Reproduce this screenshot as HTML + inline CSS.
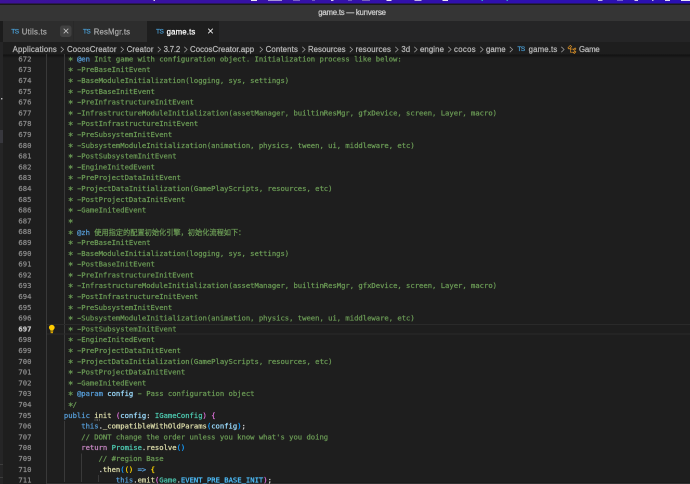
<!DOCTYPE html><html><head><meta charset="utf-8"><title>game.ts — kunverse</title><style>

html,body{margin:0;padding:0;background:#1e1e1e;}
body{width:690px;height:484px;overflow:hidden;position:relative;font-family:"Liberation Sans","Noto Sans CJK SC",sans-serif;}
.a{position:absolute;white-space:pre;}
.ui{font-family:"Liberation Sans","Noto Sans CJK SC",sans-serif;font-size:15.6px;line-height:20px;}
.m{font-family:"DejaVu Sans Mono","Liberation Mono","Noto Sans CJK SC",monospace;font-size:14.4px;line-height:21.6px;height:21.6px;letter-spacing:-0.003px;}
.m,.ui{-webkit-text-stroke:0.5px currentColor;}
.as{display:inline-block;transform:translateY(3.4px) scale(1.22);}
.us{position:relative;top:-2.4px;}
.hy{display:inline-block;transform:scaleX(1.7);}
.cj{font-family:"Noto Sans CJK SC",sans-serif;font-size:14.4px;letter-spacing:0;}
.ln{color:#8b8b8b;text-align:right;left:0;width:62.8px;}
.g{position:absolute;width:2px;background:#393939;}
.ts{color:#4a9fd6;font-size:13px;letter-spacing:-0.9px;-webkit-text-stroke:0.4px currentColor;}
.sep{color:#a0a0a0;}

</style></head><body><div id="root" style="position:absolute;left:0;top:0;width:1380px;height:968px;transform:scale(0.5);transform-origin:0 0;will-change:transform;">
<div class="a" style="left:0;top:0;width:1380px;height:8px;background:linear-gradient(90deg,#3d1298,#3411aa 50%,#2a10b4)"></div>
<div class="a" style="left:307px;top:0;width:3px;height:2.2px;background:#fff;opacity:0.8"></div>
<div class="a" style="left:502px;top:0;width:12px;height:2.2px;background:#fff;opacity:0.9"></div>
<div class="a" style="left:536px;top:0;width:28px;height:2.2px;background:#fff;opacity:0.55"></div>
<div class="a" style="left:586px;top:0;width:14px;height:2.2px;background:#fff;opacity:0.35"></div>
<div class="a" style="left:624px;top:0;width:6px;height:2.2px;background:#fff;opacity:0.3"></div>
<div class="a" style="left:662px;top:0;width:5px;height:2.2px;background:#fff;opacity:0.8"></div>
<div class="a" style="left:696px;top:0;width:8px;height:2.2px;background:#fff;opacity:0.3"></div>
<div class="a" style="left:724px;top:0;width:16px;height:2.2px;background:#ccc;opacity:0.45"></div>
<div class="a" style="left:773.2px;top:0;width:9.8px;height:2.2px;background:#fff;opacity:0.9"></div>
<div class="a" style="left:829.4px;top:0;width:13.8px;height:2.2px;background:#fff;opacity:0.7"></div>
<div class="a" style="left:885px;top:0;width:11px;height:2.2px;background:#fff;opacity:0.9"></div>
<div class="a" style="left:963px;top:0;width:3px;height:2.2px;background:#3cc;opacity:0.8"></div>
<div class="a" style="left:1013px;top:0;width:3px;height:2.2px;background:#3cc;opacity:0.8"></div>
<div class="a" style="left:1196px;top:0;width:9px;height:2.2px;background:#fff;opacity:0.7"></div>
<div class="a" style="left:1234px;top:0;width:12px;height:2.2px;background:#fff;opacity:0.35"></div>
<div class="a" style="left:1269px;top:0;width:7px;height:2.2px;background:#fff;opacity:0.8"></div>
<div class="a" style="left:1304px;top:0;width:3px;height:2.2px;background:#fff;opacity:0.7"></div>
<div class="a" style="left:1330px;top:0;width:10px;height:2.2px;background:#fff;opacity:0.85"></div>
<div class="a" style="left:1362px;top:0;width:18px;height:2.2px;background:#fff;opacity:0.9"></div>
<div class="a" style="left:0;top:6.8px;width:1380px;height:4px;background:#1a1a1a"></div>
<div class="a" style="left:0;top:10px;width:1380px;height:32px;background:#353535"></div>
<div class="a ui fit" style="left:636.6px;top:15.2px;color:#cccccc;letter-spacing:-0.4564px" id="title">game.ts — kunverse</div>
<div class="a" style="left:0;top:42px;width:1380px;height:42px;background:#252526"></div>
<div class="a" style="left:6px;top:42px;width:140px;height:42px;background:#2d2d2d"></div>
<div class="a" style="left:147px;top:42px;width:147px;height:42px;background:#2d2d2d"></div>
<div class="a" style="left:294px;top:42px;width:144px;height:42px;background:#1e1e1e"></div>
<div class="a" style="left:0;top:42px;width:6px;height:42px;background:#1c1c1c"></div>
<div class="a ui ts" style="left:22.4px;top:52.6px;" >TS</div>
<div class="a ui fit" id="t1" style="left:43.6px;top:53.8px;color:#a6a6a6;letter-spacing:0.4524px">Utils.ts</div>
<div class="a ui ts" style="left:165.8px;top:52.6px;" >TS</div>
<div class="a ui fit" id="t2" style="left:187.4px;top:53.8px;color:#a6a6a6;letter-spacing:0.3124px">ResMgr.ts</div>
<div class="a ui ts" style="left:312px;top:52.6px;" >TS</div>
<div class="a ui fit" id="t3" style="left:333.2px;top:53.8px;color:#ffffff;letter-spacing:0.3308px">game.ts</div>
<div class="a" style="left:120px;top:51px;width:23px;height:23px;border-radius:5px;background:#414141"></div>
<svg class="a" style="left:123.6px;top:54.4px" width="16" height="16" viewBox="0 0 8 8"><path d="M1.7 1.7 L6.3 6.3 M6.3 1.7 L1.7 6.3" stroke="#c5c5c5" stroke-width="0.75" fill="none"/></svg>
<svg class="a" style="left:413.4px;top:54.4px" width="16" height="16" viewBox="0 0 8 8"><path d="M1.7 1.7 L6.3 6.3 M6.3 1.7 L1.7 6.3" stroke="#ffffff" stroke-width="0.75" fill="none"/></svg>
<div class="a" style="left:6px;top:84px;width:1374px;height:27px;background:#1e1e1e"></div>
<div class="a ui fit" id="bc0" style="left:25.2px;top:88.8px;color:#b8b8b8;letter-spacing:0.3922px">Applications</div>
<div class="a ui fit" id="bc1" style="left:134px;top:88.8px;color:#b8b8b8;letter-spacing:0.2498px">CocosCreator</div>
<div class="a ui fit" id="bc2" style="left:253.2px;top:88.8px;color:#b8b8b8;letter-spacing:0.2858px">Creator</div>
<div class="a ui fit" id="bc3" style="left:327.2px;top:88.8px;color:#b8b8b8;letter-spacing:-0.3774px">3.7.2</div>
<div class="a ui fit" id="bc4" style="left:380px;top:88.8px;color:#b8b8b8;letter-spacing:0.1696px">CocosCreator.app</div>
<div class="a ui fit" id="bc5" style="left:531.2px;top:88.8px;color:#b8b8b8;letter-spacing:0.2972px">Contents</div>
<div class="a ui fit" id="bc6" style="left:616px;top:88.8px;color:#b8b8b8;letter-spacing:0.0726px">Resources</div>
<div class="a ui fit" id="bc7" style="left:711.2px;top:88.8px;color:#b8b8b8;letter-spacing:0.259px">resources</div>
<div class="a ui fit" id="bc8" style="left:802.8px;top:88.8px;color:#b8b8b8;letter-spacing:-0.0796px">3d</div>
<div class="a ui fit" id="bc9" style="left:840px;top:88.8px;color:#b8b8b8;letter-spacing:0.1954px">engine</div>
<div class="a ui fit" id="bc10" style="left:908px;top:88.8px;color:#b8b8b8;letter-spacing:0.65px">cocos</div>
<div class="a ui fit" id="bc11" style="left:972px;top:88.8px;color:#b8b8b8;letter-spacing:0.046px">game</div>
<div class="a ui fit" id="bc12" style="left:1057.2px;top:88.8px;color:#b8b8b8;letter-spacing:0.3022px">game.ts</div>
<div class="a ui fit" id="bc13" style="left:1158px;top:88.8px;color:#b8b8b8;letter-spacing:-0.3172px">Game</div>
<svg class="a" style="left:120px;top:92px" width="10" height="14" viewBox="0 0 5 7"><path d="M0.8 0.8 L3.6 3.5 L0.8 6.2" stroke="#9a9a9a" stroke-width="0.75" fill="none"/></svg>
<svg class="a" style="left:240px;top:92px" width="10" height="14" viewBox="0 0 5 7"><path d="M0.8 0.8 L3.6 3.5 L0.8 6.2" stroke="#9a9a9a" stroke-width="0.75" fill="none"/></svg>
<svg class="a" style="left:314px;top:92px" width="10" height="14" viewBox="0 0 5 7"><path d="M0.8 0.8 L3.6 3.5 L0.8 6.2" stroke="#9a9a9a" stroke-width="0.75" fill="none"/></svg>
<svg class="a" style="left:367.2px;top:92px" width="10" height="14" viewBox="0 0 5 7"><path d="M0.8 0.8 L3.6 3.5 L0.8 6.2" stroke="#9a9a9a" stroke-width="0.75" fill="none"/></svg>
<svg class="a" style="left:518px;top:92px" width="10" height="14" viewBox="0 0 5 7"><path d="M0.8 0.8 L3.6 3.5 L0.8 6.2" stroke="#9a9a9a" stroke-width="0.75" fill="none"/></svg>
<svg class="a" style="left:602.8px;top:92px" width="10" height="14" viewBox="0 0 5 7"><path d="M0.8 0.8 L3.6 3.5 L0.8 6.2" stroke="#9a9a9a" stroke-width="0.75" fill="none"/></svg>
<svg class="a" style="left:698px;top:92px" width="10" height="14" viewBox="0 0 5 7"><path d="M0.8 0.8 L3.6 3.5 L0.8 6.2" stroke="#9a9a9a" stroke-width="0.75" fill="none"/></svg>
<svg class="a" style="left:788.8px;top:92px" width="10" height="14" viewBox="0 0 5 7"><path d="M0.8 0.8 L3.6 3.5 L0.8 6.2" stroke="#9a9a9a" stroke-width="0.75" fill="none"/></svg>
<svg class="a" style="left:827.2px;top:92px" width="10" height="14" viewBox="0 0 5 7"><path d="M0.8 0.8 L3.6 3.5 L0.8 6.2" stroke="#9a9a9a" stroke-width="0.75" fill="none"/></svg>
<svg class="a" style="left:894.8px;top:92px" width="10" height="14" viewBox="0 0 5 7"><path d="M0.8 0.8 L3.6 3.5 L0.8 6.2" stroke="#9a9a9a" stroke-width="0.75" fill="none"/></svg>
<svg class="a" style="left:958.8px;top:92px" width="10" height="14" viewBox="0 0 5 7"><path d="M0.8 0.8 L3.6 3.5 L0.8 6.2" stroke="#9a9a9a" stroke-width="0.75" fill="none"/></svg>
<svg class="a" style="left:1018px;top:92px" width="10" height="14" viewBox="0 0 5 7"><path d="M0.8 0.8 L3.6 3.5 L0.8 6.2" stroke="#9a9a9a" stroke-width="0.75" fill="none"/></svg>
<svg class="a" style="left:1121.2px;top:92px" width="10" height="14" viewBox="0 0 5 7"><path d="M0.8 0.8 L3.6 3.5 L0.8 6.2" stroke="#9a9a9a" stroke-width="0.75" fill="none"/></svg>
<div class="a ui ts" style="left:1034.8px;top:88px;">TS</div>
<svg class="a" style="left:1134px;top:89px" width="20" height="20" viewBox="0 0 16 16"><path d="M11.34 9.71h.71l2.67-2.67v-.71L13.38 5h-.7l-1.82 1.81h-5V5.56l1.86-1.85V3l-2-2H5L1 5v.71l2 2h.71l1.14-1.15v5.79l.5.5H10v.52l1.33 1.34h.71l2.67-2.67v-.71L13.37 10h-.7l-1.86 1.85h-5v-4H10v.48l1.34 1.38zm1.69-3.65l.63.63-2 2-.63-.63 2-2zm0 5l.63.63-2 2-.63-.63 2-2zM3.35 6.65l-1.29-1.3 3.29-3.29 1.3 1.29-3.3 3.3z" fill="#ee9d28" fill-rule="evenodd"/></svg>
<div class="a" style="left:6px;top:108.8px;width:1374px;height:6.8px;background:linear-gradient(rgba(12,12,12,0.75),rgba(12,12,12,0.45) 35%,rgba(12,12,12,0))"></div>
<div class="a" style="left:0;top:84px;width:6px;height:884px;background:#252526"></div>
<div class="a" style="left:0;top:260px;width:6px;height:26px;background:#37373d"></div>
<div class="a" style="left:1.6px;top:196.4px;width:3px;height:3px;border-radius:2px;background:#e0e0e0"></div>
<div class="a" style="left:0;top:928px;width:6px;height:2px;background:#3c3c3c"></div>
<div class="a" style="left:0;top:954px;width:6px;height:2px;background:#3c3c3c"></div>
<div class="g" style="left:92px;top:107.7px;height:885.6px"></div>
<div class="g" style="left:128px;top:107.7px;height:712.8px"></div>
<div class="g" style="left:128px;top:842.1px;height:151.2px"></div>
<div class="g" style="left:162px;top:906.9px;height:86.4px"></div>
<div class="g" style="left:196px;top:950.1px;height:43.2px"></div>
<div class="a" style="left:93px;top:647.7px;width:1288px;height:21.6px;box-sizing:border-box;border-top:2.4px solid #2a2a2a;border-bottom:2.4px solid #2a2a2a"></div>
<svg class="a" style="left:96.8px;top:649px" width="13.2" height="18.4" viewBox="0 0 12 16.7"><path d="M6 0.6 C2.9 0.6 0.8 2.8 0.8 5.5 C0.8 7.3 1.8 8.4 2.7 9.3 C3.2 9.8 3.4 10.3 3.4 10.9 L8.6 10.9 C8.6 10.3 8.8 9.8 9.3 9.3 C10.2 8.4 11.2 7.3 11.2 5.5 C11.2 2.8 9.1 0.6 6 0.6 Z" fill="#ffcc00"/><rect x="3.4" y="11.4" width="5.2" height="1.6" fill="#e8b400"/><rect x="3.8" y="13.6" width="4.4" height="2.2" fill="#d9a300"/></svg>
<div class="a" style="left:93px;top:966px;width:1288px;height:2px;background:#303030"></div>
<div class="a" style="left:93px;top:964px;width:1288px;height:2px;background:#1b1b1b"></div>
<div class="a m ln" style="top:107.7px">672</div>
<div class="a m" id="L672" style="left:136.54px;top:107.7px"><span style="color:#6a9955"><span class="as">*</span> </span><span style="color:#569cd6">@en</span><span style="color:#6a9955"> Init game with configuration object. Initialization process like below:</span></div>
<div class="a m ln" style="top:129.3px">673</div>
<div class="a m" id="L673" style="left:136.54px;top:129.3px"><span style="color:#6a9955"><span class="as">*</span> <span class="hy">-</span>PreBaseInitEvent</span></div>
<div class="a m ln" style="top:150.9px">674</div>
<div class="a m" id="L674" style="left:136.54px;top:150.9px"><span style="color:#6a9955"><span class="as">*</span> <span class="hy">-</span>BaseModuleInitialization(logging, sys, settings)</span></div>
<div class="a m ln" style="top:172.5px">675</div>
<div class="a m" id="L675" style="left:136.54px;top:172.5px"><span style="color:#6a9955"><span class="as">*</span> <span class="hy">-</span>PostBaseInitEvent</span></div>
<div class="a m ln" style="top:194.1px">676</div>
<div class="a m" id="L676" style="left:136.54px;top:194.1px"><span style="color:#6a9955"><span class="as">*</span> <span class="hy">-</span>PreInfrastructureInitEvent</span></div>
<div class="a m ln" style="top:215.7px">677</div>
<div class="a m" id="L677" style="left:136.54px;top:215.7px"><span style="color:#6a9955"><span class="as">*</span> <span class="hy">-</span>InfrastructureModuleInitialization(assetManager, builtinResMgr, gfxDevice, screen, Layer, macro)</span></div>
<div class="a m ln" style="top:237.3px">678</div>
<div class="a m" id="L678" style="left:136.54px;top:237.3px"><span style="color:#6a9955"><span class="as">*</span> <span class="hy">-</span>PostInfrastructureInitEvent</span></div>
<div class="a m ln" style="top:258.9px">679</div>
<div class="a m" id="L679" style="left:136.54px;top:258.9px"><span style="color:#6a9955"><span class="as">*</span> <span class="hy">-</span>PreSubsystemInitEvent</span></div>
<div class="a m ln" style="top:280.5px">680</div>
<div class="a m" id="L680" style="left:136.54px;top:280.5px"><span style="color:#6a9955"><span class="as">*</span> <span class="hy">-</span>SubsystemModuleInitialization(animation, physics, tween, ui, middleware, etc)</span></div>
<div class="a m ln" style="top:302.1px">681</div>
<div class="a m" id="L681" style="left:136.54px;top:302.1px"><span style="color:#6a9955"><span class="as">*</span> <span class="hy">-</span>PostSubsystemInitEvent</span></div>
<div class="a m ln" style="top:323.7px">682</div>
<div class="a m" id="L682" style="left:136.54px;top:323.7px"><span style="color:#6a9955"><span class="as">*</span> <span class="hy">-</span>EngineInitedEvent</span></div>
<div class="a m ln" style="top:345.3px">683</div>
<div class="a m" id="L683" style="left:136.54px;top:345.3px"><span style="color:#6a9955"><span class="as">*</span> <span class="hy">-</span>PreProjectDataInitEvent</span></div>
<div class="a m ln" style="top:366.9px">684</div>
<div class="a m" id="L684" style="left:136.54px;top:366.9px"><span style="color:#6a9955"><span class="as">*</span> <span class="hy">-</span>ProjectDataInitialization(GamePlayScripts, resources, etc)</span></div>
<div class="a m ln" style="top:388.5px">685</div>
<div class="a m" id="L685" style="left:136.54px;top:388.5px"><span style="color:#6a9955"><span class="as">*</span> <span class="hy">-</span>PostProjectDataInitEvent</span></div>
<div class="a m ln" style="top:410.1px">686</div>
<div class="a m" id="L686" style="left:136.54px;top:410.1px"><span style="color:#6a9955"><span class="as">*</span> <span class="hy">-</span>GameInitedEvent</span></div>
<div class="a m ln" style="top:431.7px">687</div>
<div class="a m" id="L687" style="left:136.54px;top:431.7px"><span style="color:#6a9955"><span class="as">*</span></span></div>
<div class="a m ln" style="top:453.3px">688</div>
<div class="a m" id="L688" style="left:136.54px;top:453.3px"><span style="color:#6a9955"><span class="as">*</span> </span><span style="color:#569cd6">@zh</span><span style="color:#6a9955"> </span><span class="cj" style="color:#6a9955">使用指定的配置初始化引擎，初始化流程如下：</span></div>
<div class="a m ln" style="top:474.9px">689</div>
<div class="a m" id="L689" style="left:136.54px;top:474.9px"><span style="color:#6a9955"><span class="as">*</span> <span class="hy">-</span>PreBaseInitEvent</span></div>
<div class="a m ln" style="top:496.5px">690</div>
<div class="a m" id="L690" style="left:136.54px;top:496.5px"><span style="color:#6a9955"><span class="as">*</span> <span class="hy">-</span>BaseModuleInitialization(logging, sys, settings)</span></div>
<div class="a m ln" style="top:518.1px">691</div>
<div class="a m" id="L691" style="left:136.54px;top:518.1px"><span style="color:#6a9955"><span class="as">*</span> <span class="hy">-</span>PostBaseInitEvent</span></div>
<div class="a m ln" style="top:539.7px">692</div>
<div class="a m" id="L692" style="left:136.54px;top:539.7px"><span style="color:#6a9955"><span class="as">*</span> <span class="hy">-</span>PreInfrastructureInitEvent</span></div>
<div class="a m ln" style="top:561.3px">693</div>
<div class="a m" id="L693" style="left:136.54px;top:561.3px"><span style="color:#6a9955"><span class="as">*</span> <span class="hy">-</span>InfrastructureModuleInitialization(assetManager, builtinResMgr, gfxDevice, screen, Layer, macro)</span></div>
<div class="a m ln" style="top:582.9px">694</div>
<div class="a m" id="L694" style="left:136.54px;top:582.9px"><span style="color:#6a9955"><span class="as">*</span> <span class="hy">-</span>PostInfrastructureInitEvent</span></div>
<div class="a m ln" style="top:604.5px">695</div>
<div class="a m" id="L695" style="left:136.54px;top:604.5px"><span style="color:#6a9955"><span class="as">*</span> <span class="hy">-</span>PreSubsystemInitEvent</span></div>
<div class="a m ln" style="top:626.1px">696</div>
<div class="a m" id="L696" style="left:136.54px;top:626.1px"><span style="color:#6a9955"><span class="as">*</span> <span class="hy">-</span>SubsystemModuleInitialization(animation, physics, tween, ui, middleware, etc)</span></div>
<div class="a m ln" style="top:647.7px;color:#c6c6c6;font-weight:bold">697</div>
<div class="a m" id="L697" style="left:136.54px;top:647.7px"><span style="color:#6a9955"><span class="as">*</span> <span class="hy">-</span>PostSubsystemInitEvent</span></div>
<div class="a m ln" style="top:669.3px">698</div>
<div class="a m" id="L698" style="left:136.54px;top:669.3px"><span style="color:#6a9955"><span class="as">*</span> <span class="hy">-</span>EngineInitedEvent</span></div>
<div class="a m ln" style="top:690.9px">699</div>
<div class="a m" id="L699" style="left:136.54px;top:690.9px"><span style="color:#6a9955"><span class="as">*</span> <span class="hy">-</span>PreProjectDataInitEvent</span></div>
<div class="a m ln" style="top:712.5px">700</div>
<div class="a m" id="L700" style="left:136.54px;top:712.5px"><span style="color:#6a9955"><span class="as">*</span> <span class="hy">-</span>ProjectDataInitialization(GamePlayScripts, resources, etc)</span></div>
<div class="a m ln" style="top:734.1px">701</div>
<div class="a m" id="L701" style="left:136.54px;top:734.1px"><span style="color:#6a9955"><span class="as">*</span> <span class="hy">-</span>PostProjectDataInitEvent</span></div>
<div class="a m ln" style="top:755.7px">702</div>
<div class="a m" id="L702" style="left:136.54px;top:755.7px"><span style="color:#6a9955"><span class="as">*</span> <span class="hy">-</span>GameInitedEvent</span></div>
<div class="a m ln" style="top:777.3px">703</div>
<div class="a m" id="L703" style="left:136.54px;top:777.3px"><span style="color:#6a9955"><span class="as">*</span> </span><span style="color:#569cd6">@param</span><span style="color:#6a9955"> </span><span style="color:#9cdcfe">config</span><span style="color:#6a9955"> </span><span style="color:#6a9955"><span class="hy">-</span></span><span style="color:#6a9955"> Pass configuration object</span></div>
<div class="a m ln" style="top:798.9px">704</div>
<div class="a m" id="L704" style="left:136.54px;top:798.9px"><span style="color:#6a9955"><span class="as">*</span>/</span></div>
<div class="a m ln" style="top:820.5px">705</div>
<div class="a m" id="L705" style="left:127.86px;top:820.5px"><span style="color:#569cd6">public</span><span style="color:#d4d4d4"> </span><span style="color:#dcdcaa">init</span><span style="color:#d4d4d4"> </span><span style="color:#da70d6">(</span><span style="color:#9cdcfe">config</span><span style="color:#d4d4d4">:</span><span style="color:#d4d4d4"> </span><span style="color:#4ec9b0">IGameConfig</span><span style="color:#da70d6">)</span><span style="color:#d4d4d4"> </span><span style="color:#da70d6">{</span></div>
<div class="a m ln" style="top:842.1px">706</div>
<div class="a m" id="L706" style="left:162.54px;top:842.1px"><span style="color:#569cd6">this</span><span style="color:#d4d4d4">.</span><span style="color:#dcdcaa"><span class="us">_</span>compatibleWithOldParams</span><span style="color:#179fff">(</span><span style="color:#9cdcfe">config</span><span style="color:#179fff">)</span><span style="color:#d4d4d4">;</span></div>
<div class="a m ln" style="top:863.7px">707</div>
<div class="a m" id="L707" style="left:162.54px;top:863.7px"><span style="color:#6a9955">// DONT change the order unless you know what&#x27;s you doing</span></div>
<div class="a m ln" style="top:885.3px">708</div>
<div class="a m" id="L708" style="left:162.54px;top:885.3px"><span style="color:#c586c0">return</span><span style="color:#d4d4d4"> </span><span style="color:#4ec9b0">Promise</span><span style="color:#d4d4d4">.</span><span style="color:#dcdcaa">resolve</span><span style="color:#179fff">()</span></div>
<div class="a m ln" style="top:906.9px">709</div>
<div class="a m" id="L709" style="left:197.2px;top:906.9px"><span style="color:#6a9955">// #region Base</span></div>
<div class="a m ln" style="top:928.5px">710</div>
<div class="a m" id="L710" style="left:197.2px;top:928.5px"><span style="color:#d4d4d4">.</span><span style="color:#dcdcaa">then</span><span style="color:#179fff">(</span><span style="color:#ffd700">()</span><span style="color:#d4d4d4"> </span><span style="color:#569cd6">=&gt;</span><span style="color:#d4d4d4"> </span><span style="color:#ffd700">{</span></div>
<div class="a m ln" style="top:950.1px">711</div>
<div class="a m" id="L711" style="left:231.86px;top:950.1px"><span style="color:#569cd6">this</span><span style="color:#d4d4d4">.</span><span style="color:#dcdcaa">emit</span><span style="color:#da70d6">(</span><span style="color:#4ec9b0">Game</span><span style="color:#d4d4d4">.</span><span style="color:#4fc1ff">EVENT<span class="us">_</span>PRE<span class="us">_</span>BASE<span class="us">_</span>INIT</span><span style="color:#da70d6">)</span><span style="color:#d4d4d4">;</span></div>
<div class="a" style="left:188.54px;top:839.1px;width:11px;height:2px;background:repeating-linear-gradient(90deg,#8a8a8a 0 2.2px,transparent 2.2px 4.4px)"></div>
</div></body></html>
